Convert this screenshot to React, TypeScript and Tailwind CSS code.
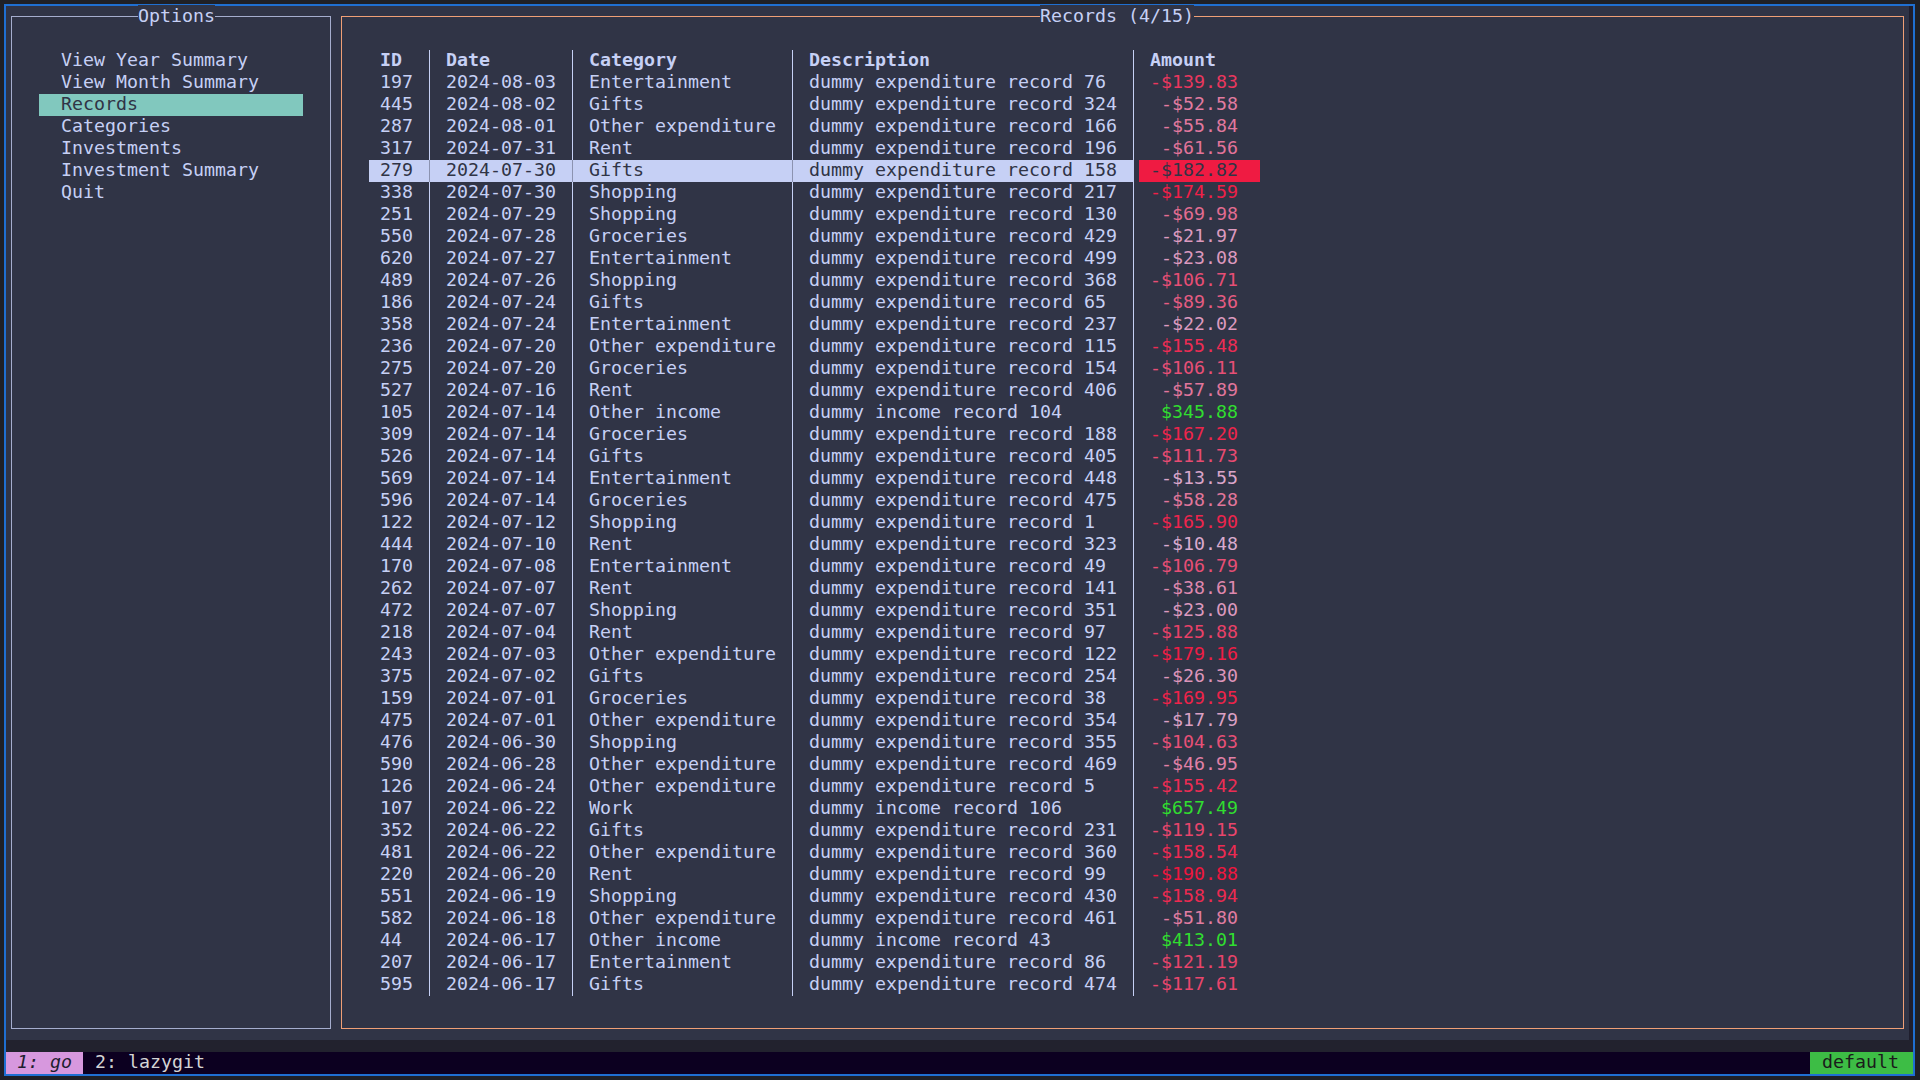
import React from "react";

type Row = [number, string, string, number, number];

// id, date, category, record no, amount
const rows: Row[] = [
  [197, "2024-08-03", "Entertainment", 76, -139.83],
  [445, "2024-08-02", "Gifts", 324, -52.58],
  [287, "2024-08-01", "Other expenditure", 166, -55.84],
  [317, "2024-07-31", "Rent", 196, -61.56],
  [279, "2024-07-30", "Gifts", 158, -182.82],
  [338, "2024-07-30", "Shopping", 217, -174.59],
  [251, "2024-07-29", "Shopping", 130, -69.98],
  [550, "2024-07-28", "Groceries", 429, -21.97],
  [620, "2024-07-27", "Entertainment", 499, -23.08],
  [489, "2024-07-26", "Shopping", 368, -106.71],
  [186, "2024-07-24", "Gifts", 65, -89.36],
  [358, "2024-07-24", "Entertainment", 237, -22.02],
  [236, "2024-07-20", "Other expenditure", 115, -155.48],
  [275, "2024-07-20", "Groceries", 154, -106.11],
  [527, "2024-07-16", "Rent", 406, -57.89],
  [105, "2024-07-14", "Other income", 104, 345.88],
  [309, "2024-07-14", "Groceries", 188, -167.2],
  [526, "2024-07-14", "Gifts", 405, -111.73],
  [569, "2024-07-14", "Entertainment", 448, -13.55],
  [596, "2024-07-14", "Groceries", 475, -58.28],
  [122, "2024-07-12", "Shopping", 1, -165.9],
  [444, "2024-07-10", "Rent", 323, -10.48],
  [170, "2024-07-08", "Entertainment", 49, -106.79],
  [262, "2024-07-07", "Rent", 141, -38.61],
  [472, "2024-07-07", "Shopping", 351, -23.0],
  [218, "2024-07-04", "Rent", 97, -125.88],
  [243, "2024-07-03", "Other expenditure", 122, -179.16],
  [375, "2024-07-02", "Gifts", 254, -26.3],
  [159, "2024-07-01", "Groceries", 38, -169.95],
  [475, "2024-07-01", "Other expenditure", 354, -17.79],
  [476, "2024-06-30", "Shopping", 355, -104.63],
  [590, "2024-06-28", "Other expenditure", 469, -46.95],
  [126, "2024-06-24", "Other expenditure", 5, -155.42],
  [107, "2024-06-22", "Work", 106, 657.49],
  [352, "2024-06-22", "Gifts", 231, -119.15],
  [481, "2024-06-22", "Other expenditure", 360, -158.54],
  [220, "2024-06-20", "Rent", 99, -190.88],
  [551, "2024-06-19", "Shopping", 430, -158.94],
  [582, "2024-06-18", "Other expenditure", 461, -51.8],
  [44, "2024-06-17", "Other income", 43, 413.01],
  [207, "2024-06-17", "Entertainment", 86, -121.19],
  [595, "2024-06-17", "Gifts", 474, -117.61],
];

const SELECTED = 4;

const options = [
  "View Year Summary",
  "View Month Summary",
  "Records",
  "Categories",
  "Investments",
  "Investment Summary",
  "Quit",
];

function amountColor(v: number) {
  if (v > 0) return "#30dd30";
  const t = Math.pow(Math.min(1, -v / 190), 0.7);
  const lo = [214, 192, 228];
  const hi = [240, 22, 62];
  const c = lo.map((l, i) => Math.round(l + (hi[i] - l) * t));
  return `rgb(${c[0]}, ${c[1]}, ${c[2]})`;
}

function formatAmount(v: number) {
  const s = "$" + Math.abs(v).toFixed(2);
  return v < 0 ? "-" + s : s;
}

function Sep({ sel, last }: { sel?: boolean; last?: boolean }) {
  if (sel && last) {
    return (
      <div className="w-[11px] h-full flex">
        <div className="w-[6px] bg-[#c6d0f5]" />
      </div>
    );
  }
  return (
    <div className={`w-[11px] h-full flex ${sel ? "bg-[#c6d0f5]" : ""}`}>
      <div className="w-[5px]" />
      <div className={`w-px ${sel ? "bg-[#8c93b0]" : "bg-[#c6d0f5]"}`} />
    </div>
  );
}

function OptionsBlock() {
  return (
    <div className="relative w-[330px] h-full">
      <div className="absolute left-[5px] right-[5px] top-[10px] bottom-[11px] border border-[#a5adce]" />
      <div className="relative h-[22px] pl-[132px]">
        <span className="bg-[#303446]">Options</span>
      </div>
      <div className="h-[22px]" />
      {options.map((o) => (
        <div
          key={o}
          className={`h-[22px] ml-[33px] w-[264px] pl-[22px] ${
            o === "Records" ? "bg-[#81c8be] text-[#303446]" : ""
          }`}
        >
          {o}
        </div>
      ))}
    </div>
  );
}

function RecordsBlock() {
  return (
    <div className="relative w-[1573px] h-full">
      <div className="absolute left-[5px] right-[5px] top-[10px] bottom-[11px] border border-[#ef9f76]" />
      <div className="relative h-[22px] pl-[704px]">
        <span className="bg-[#303446]">Records (4/15)</span>
      </div>
      <div className="h-[22px]" />
      <div className="relative ml-[33px] flex flex-col">
        {/* header */}
        <div className="h-[22px] flex font-bold">
          <div className="w-[55px] pl-[11px]">ID</div>
          <Sep />
          <div className="w-[132px] pl-[11px]">Date</div>
          <Sep />
          <div className="w-[209px] pl-[11px]">Category</div>
          <Sep />
          <div className="w-[330px] pl-[11px]">Description</div>
          <Sep />
          <div className="w-[121px] pl-[11px]">Amount</div>
        </div>
        {rows.map((r, i) => {
          const [id, date, cat, no, amt] = r;
          const sel = i === SELECTED;
          const desc = amt > 0 ? `dummy income record ${no}` : `dummy expenditure record ${no}`;
          const cell = sel ? "bg-[#c6d0f5] text-[#303446]" : "";
          return (
            <div key={i} className="h-[22px] flex">
              <div className={`w-[55px] pl-[11px] ${cell}`}>{id}</div>
              <Sep sel={sel} />
              <div className={`w-[132px] pl-[11px] ${cell}`}>{date}</div>
              <Sep sel={sel} />
              <div className={`w-[209px] pl-[11px] ${cell}`}>{cat}</div>
              <Sep sel={sel} />
              <div className={`w-[330px] pl-[11px] ${cell}`}>{desc}</div>
              <Sep sel={sel} last />
              <div
                className="w-[121px] pl-[11px]"
                style={sel ? { background: amountColor(amt), color: "#303446" } : { color: amountColor(amt) }}
              >
                <div className="w-[88px] text-right">{formatAmount(amt)}</div>
              </div>
            </div>
          );
        })}
      </div>
    </div>
  );
}

export default function App() {
  return (
    <div className="w-[1920px] h-[1080px] bg-[#1f2026] pl-[4px] pt-[4px] overflow-hidden font-['DejaVu_Sans_Mono',monospace] text-[18.27px] leading-[20px] text-[#c6d0f5]">
      <div className="w-[1911px] h-[1072px] border-2 border-[#1f6fd1] flex flex-col">
        <div className="flex h-[1034px]">
          <div className="w-[1903px] h-full bg-[#303446] flex">
            <OptionsBlock />
            <RecordsBlock />
          </div>
          <div className="flex-1 bg-[#1f1e2d]" />
        </div>
        <div className="h-[12px] bg-[#22222e]" />
        <div className="h-[22px] bg-[#0c0020] flex text-[#d4d4d4]">
          <div className="w-[77px] h-full bg-[#d798de] text-[#1e1e2e] italic pl-[11px]">1: go</div>
          <div className="pl-[12px]">2: lazygit</div>
          <div className="flex-1" />
          <div className="w-[103px] h-full bg-[#3dbd45] text-[#1b1b1b] pl-[12px]">default</div>
        </div>
      </div>
    </div>
  );
}
